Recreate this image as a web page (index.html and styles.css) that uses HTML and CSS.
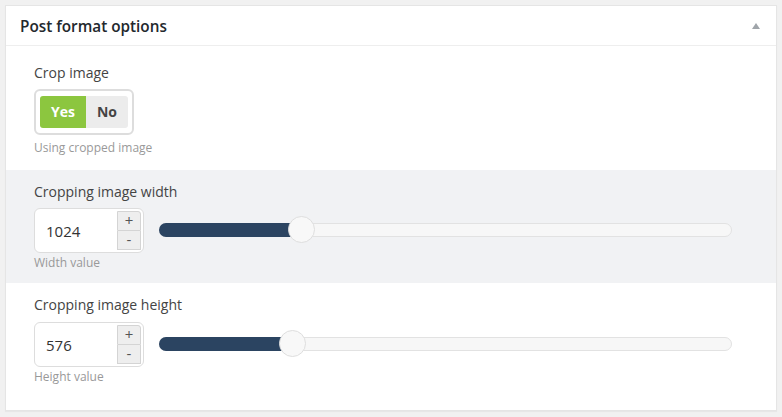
FILE: index.html
```html
<!DOCTYPE html>
<html lang="en">
<head>
    <meta charset="UTF-8">
    <title>Post format options</title>
    <link rel="stylesheet" href="styles.css">
</head>
<body>
    <div class="postbox">
        <div class="postbox-header">
            <h2 class="postbox-title">Post format options</h2>
            <svg class="toggle-arrow" width="10" height="8" viewBox="0 0 10 8">
                <polygon points="1,7 5,1 9,7" fill="#a0a5aa"></polygon>
            </svg>
        </div>

        <div class="field field-first">
            <div class="field-label">Crop image</div>
            <div class="switch">
                <span class="switch-btn active">Yes</span>
                <span class="switch-btn">No</span>
            </div>
            <div class="field-desc">Using cropped image</div>
        </div>

        <div class="field field-alt">
            <div class="field-label">Cropping image width</div>
            <div class="range-row">
                <div class="number-box">
                    <span class="number-value">1024</span>
                    <div class="spinner">
                        <span class="spin-btn">+</span>
                        <span class="spin-btn">-</span>
                    </div>
                </div>
                <div class="slider">
                    <div class="slider-fill" style="width: 142px"></div>
                    <div class="slider-handle" style="left: 128px"></div>
                </div>
            </div>
            <div class="field-desc">Width value</div>
        </div>

        <div class="field field-last">
            <div class="field-label">Cropping image height</div>
            <div class="range-row">
                <div class="number-box">
                    <span class="number-value">576</span>
                    <div class="spinner">
                        <span class="spin-btn">+</span>
                        <span class="spin-btn">-</span>
                    </div>
                </div>
                <div class="slider">
                    <div class="slider-fill" style="width: 133px"></div>
                    <div class="slider-handle" style="left: 119px"></div>
                </div>
            </div>
            <div class="field-desc">Height value</div>
        </div>
    </div>
</body>
</html>
```

FILE: styles.css
```css
body {
    margin: 0;
    padding: 5px 5px 6px;
    background-color: #f1f1f1;
    font-family: "Open Sans", "Noto Sans", sans-serif;
    color: #32373c;
}

.postbox {
    background-color: #fff;
    border: 1px solid #e5e5e5;
    box-shadow: 0 1px 1px rgba(0, 0, 0, 0.04);
}

.postbox-header {
    height: 39px;
    display: flex;
    align-items: center;
    justify-content: space-between;
    padding: 0 14px 0 14px;
    border-bottom: 1px solid #eee;
}

.postbox-title {
    margin: 0;
    font-size: 15.3px;
    font-weight: 600;
    line-height: 20px;
    color: #23282d;
}

.toggle-arrow {
    display: block;
    margin-right: 1px;
}

.field {
    padding: 12px 28px 12px;
}

.field-first {
    padding-top: 17px;
    padding-bottom: 14px;
}

.field-alt {
    padding-top: 12px;
    background-color: #f1f2f4;
}

.field-last {
    padding-bottom: 25px;
}

.field-label {
    font-size: 14px;
    line-height: 20px;
    color: #444;
}

.field-desc {
    font-size: 12px;
    line-height: 16px;
    color: #999;
    margin-top: 2px;
}

.field-first .field-desc {
    margin-top: 5px;
}

/* yes / no switch */
.switch {
    display: inline-flex;
    margin-top: 6px;
    padding: 5px 4px;
    border: 2px solid #ddd;
    border-radius: 6px;
    background-color: #fff;
}

.switch-btn {
    height: 32px;
    line-height: 32px;
    padding: 0 11px;
    font-size: 14px;
    font-weight: 700;
    background-color: #ececec;
    color: #444;
}

.switch-btn:first-child {
    border-radius: 3px 0 0 3px;
}

.switch-btn:last-child {
    border-radius: 0 3px 3px 0;
}

.switch-btn.active {
    background-color: #8cc63f;
    color: #fff;
}

/* number + slider */
.range-row {
    display: flex;
    align-items: center;
    margin-top: 6px;
}

.field-last .range-row {
    margin-top: 7px;
}

.number-box {
    width: 95px;
    height: 43px;
    border: 1px solid #ddd;
    border-radius: 6px;
    background-color: #fff;
    display: flex;
    align-items: center;
    justify-content: space-between;
    padding-left: 11px;
    padding-right: 2px;
    box-sizing: content-box;
    flex-shrink: 0;
}

.number-value {
    font-size: 15px;
    color: #333;
}

.spinner {
    display: flex;
    flex-direction: column;
    width: 24px;
}

.spin-btn {
    height: 19px;
    line-height: 17px;
    text-align: center;
    font-size: 15px;
    color: #555;
    background-color: #eee;
    border: 1px solid #d4d4d4;
    box-sizing: border-box;
}

.spin-btn:first-child {
    height: 20px;
    border-radius: 0 3px 0 0;
}

.spin-btn:last-child {
    border-top: none;
}

.slider {
    position: relative;
    flex: 1;
    height: 14px;
    margin: -2px 16px 0 15px;
    border: 1px solid #e2e2e2;
    border-radius: 7px;
    background-color: #f7f7f7;
    box-sizing: border-box;
}

.slider-fill {
    height: 14px;
    margin: -1px 0 0 -1px;
    border-radius: 7px 0 0 7px;
    background-color: #2b4461;
}

.slider-handle {
    position: absolute;
    top: -8px;
    width: 27px;
    height: 27px;
    border: 1px solid #dedede;
    border-radius: 50%;
    background-color: #f8f8f8;
    box-sizing: border-box;
}
```
